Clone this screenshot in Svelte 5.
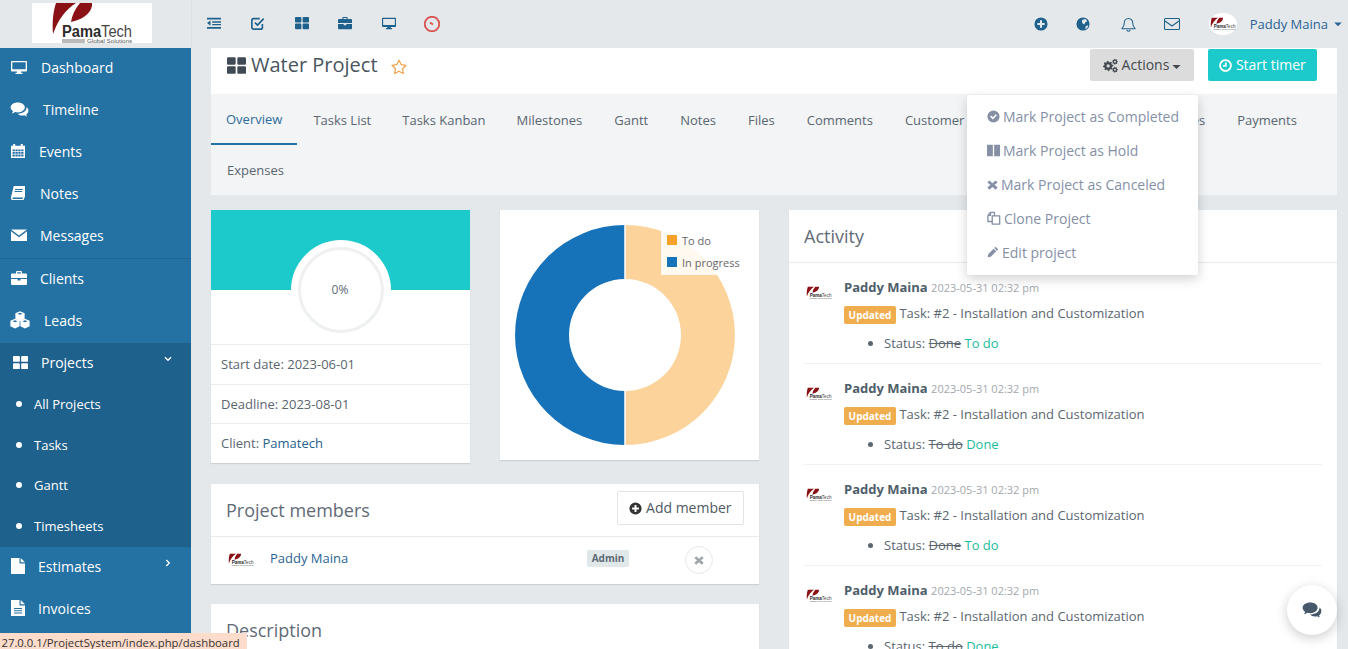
<script>
  const rr = (x, y, w, h, r) =>
    `M${x + r} ${y}h${w - 2 * r}a${r} ${r} 0 0 1 ${r} ${r}v${h - 2 * r}a${r} ${r} 0 0 1-${r} ${r}h-${w - 2 * r}a${r} ${r} 0 0 1-${r}-${r}v-${h - 2 * r}a${r} ${r} 0 0 1 ${r}-${r}z`;
  const disc = (cx, cy, r) => `M${cx - r} ${cy}a${r} ${r} 0 1 0 ${2 * r} 0a${r} ${r} 0 1 0-${2 * r} 0z`;
  const gear = (cx, cy, r, n) => {
    let p = '';
    for (let i = 0; i < n * 4; i++) {
      const a = (i / (n * 4)) * Math.PI * 2 - 0.2;
      const q = i % 4 < 2 ? r : r * 0.76;
      p += `${i ? 'L' : 'M'}${(cx + q * Math.cos(a)).toFixed(2)} ${(cy + q * Math.sin(a)).toFixed(2)}`;
    }
    return p + 'z' + disc(cx, cy, r * 0.32);
  };
  const calHoles = () => {
    let p = '';
    for (const y of [6.4, 9, 11.6]) for (const x of [2.5, 5.4, 8.3, 11.2]) p += `M${x} ${y}h2.300v1.800h-2.300z`;
    return p;
  };
  const hex = (x, y) =>
    `M${x} ${y - 4}l3.700 1.600v4.300L${x} ${y + 3.800}l-3.700-1.900v-4.300z M${x} ${y - 2.800}l-2 .8 2 .8 2-.8z`;

  const I = {
    desktop: { d: 'M1 2h14a1 1 0 0 1 1 1v8.500a1 1 0 0 1-1 1H10v1.300h1.500V15h-7v-1.200H6v-1.300H1a1 1 0 0 1-1-1V3a1 1 0 0 1 1-1z M1.300 3.300v6.900h13.400V3.300z' },
    comments: { d: 'M6.500 2C3 2 .5 3.900.5 6.200c0 1.300.8 2.500 2 3.300-.2.7-.6 1.300-1 1.800 1-.1 2-.5 2.800-1.100.7.2 1.400.3 2.200.3 3.500 0 6-1.900 6-4.300S10 2 6.500 2z M15.500 8.500c0-1-.6-1.900-1.500-2.600v.3c0 3-3 5.300-7 5.300h-.6c.9 1 2.400 1.600 4.100 1.600.6 0 1.200-.1 1.700-.2.7.5 1.400.8 2.300.9-.4-.4-.7-.9-.9-1.500 1.200-.8 1.900-2 1.900-3.800z' },
    calendar: { d: 'M1 2.800h2.200V1h2v1.800h5.600V1h2v1.800H15V15H1z' + calHoles() },
    book: { d: 'M4 1h11v10.500L13.500 15H2.500C1 15 .5 13.500 1 12L3.500 2C3.600 1.400 3.800 1 4 1z M5.200 4h7.500l-.2 1H5z M4.700 6h7.500l-.2 1H4.500z M3 12.500c-.4 0-.6.5-.5 1 .1.300.3.500.6.500h9.400l.7-1.500z' },
    envelope: { d: 'M0 2.500h16L8 8.500z M0 4.200l8 6 8-6V14H0z' },
    briefcase: { d: 'M5 3.500V2a1 1 0 0 1 1-1h4a1 1 0 0 1 1 1v1.500h4a1 1 0 0 1 1 1V8H0V4.500a1 1 0 0 1 1-1z M6.200 2.200v1.300h3.600V2.200z M0 9h6.500v1.500h3V9H16v5a1 1 0 0 1-1 1H1a1 1 0 0 1-1-1z' },
    cubes: { d: hex(8, 5) + hex(4, 11) + hex(12, 11) },
    th: { d: rr(0, 1, 7.3, 6.3, 1) + rr(8.700, 1, 7.3, 6.3, 1) + rr(0, 8.700, 7.3, 6.3, 1) + rr(8.700, 8.700, 7.3, 6.3, 1) },
    file: { d: 'M0 0h8.500v5.500H14V16H0z M9.700 0L14 4.300H9.700z' },
    filetext: { d: 'M0 0h8.500v5.500H14V16H0z M9.700 0L14 4.300H9.700z M3 8h8v1H3z M3 10.300h8v1H3z M3 12.600h8v1H3z' },
    down: { s: 'M4.500 6L8 9.500 11.500 6' },
    right: { s: 'M6 4.500L9.500 8 6 11.500' },
    outdent: { d: 'M0 2h16v2H0z M6 6h10v1.600H6z M6 9h10v1.600H6z M0 12.500h16v2H0z M4 5v6L0 8z' },
    check: { s: 'M13 9v4a2 2 0 0 1-2 2H3a2 2 0 0 1-2-2V5a2 2 0 0 1 2-2h7 M4.500 7.500L7.500 10.500 14.500 3' },
    clock: { s: 'M8 .8a7.200 7.200 0 1 0 .01 0z M6 6.500l3 2' },
    plus: { d: disc(8, 8, 7.5) + 'M6.800 3.800h2.400v3h3v2.400h-3v3H6.800v-3h-3V6.800h3z' },
    globe: { d: disc(8, 8, 7.5) + 'M7.500 3l3.500-.6 1.800 2.400-2.300 1.600-1 2.300-2.200-1.600-.6-2.400z M11 10.500l3-1.200-.7 2.800-2.600 2.200z' },
    bell: { s: 'M8 1.500c-3 0-4.500 2.500-4.500 5 0 3-1 4.500-2.500 6h14c-1.500-1.500-2.500-3-2.500-6 0-2.500-1.500-5-4.500-5z M6.300 13.500a1.700 1.700 0 0 0 3.400 0' },
    mail: { s: 'M1.500 2.500h13a1 1 0 0 1 1 1v9a1 1 0 0 1-1 1h-13a1 1 0 0 1-1-1v-9a1 1 0 0 1 1-1z M1 5l7 5 7-5' },
    star: { s: 'M8 1.200l2.100 4.400 4.900.7-3.500 3.400.8 4.800L8 12.200l-4.300 2.300.8-4.800L1 6.300l4.900-.7z' },
    cogs: { d: gear(5.5, 8.500, 5.5, 8) + gear(12.800, 4, 3.100, 7) + gear(12.800, 12.500, 3.100, 7) },
    timer: { s: 'M8 1.400a6.600 6.600 0 1 0 .01 0z M8.400 4.200v4.300H5' },
    okcircle: { d: disc(8, 8, 7.5) + 'M3.800 8.200l1.400-1.400 2 2 3.600-3.600 1.400 1.400-5 5z' },
    pause: { d: 'M0 1h7.200v14H0z M8.800 1H16v14H8.800z' },
    times: { d: 'M3.500 2L8 6l4.500-4 3 3L11 8.500l4.500 4-3 3L8 11.500l-4.500 4-3-3L5 8.500.5 5z' },
    clone: { s: 'M1 5l3-3.500h4.500V5 M1 5v7h4.500 M1 5h3V1.500 M6 5.500h8.500V15H6z' },
    pencil: { d: 'M11.500 1l3.500 3.500-1.800 1.800-3.500-3.500z M8.800 3.600l3.500 3.500-7.300 7.300L1 15l.6-4z' },
    caret: { d: 'M3 6h10l-5 5z' }
  };

  const nav = [
    { t: 'Dashboard', i: 'desktop', w: 30, s: 16, m: 0 },
    { t: 'Timeline', i: 'comments', w: 32, s: 19, m: -1 },
    { t: 'Events', i: 'calendar', w: 28, s: 16, m: -1 },
    { t: 'Notes', i: 'book', w: 29, s: 16, m: -1 },
    { t: 'Messages', i: 'envelope', w: 29, s: 16, m: 0 },
    { t: 'Clients', i: 'briefcase', w: 29, s: 16, m: 0, line: true },
    { t: 'Leads', i: 'cubes', w: 33, s: 20, m: -1 }
  ];
  const subs = ['All Projects', 'Tasks', 'Gantt', 'Timesheets'];
  const tabs = ['Overview', 'Tasks List', 'Tasks Kanban', 'Milestones', 'Gantt', 'Notes', 'Files', 'Comments', 'Customer feedback', 'Timesheets', 'Invoices', 'Payments', 'Expenses'];
  const menu = [
    ['okcircle', 'Mark Project as Completed', 13],
    ['pause', 'Mark Project as Hold', 13],
    ['times', 'Mark Project as Canceled', 11],
    ['clone', 'Clone Project', 14],
    ['pencil', 'Edit project', 12]
  ];
  const activity = [
    ['Done', 'To do'],
    ['To do', 'Done'],
    ['Done', 'To do'],
    ['To do', 'Done']
  ];
  const topLeft = ['outdent', 'check', 'th', 'briefcase', 'desktop', 'clock'];
  const topRight = ['plus', 'globe', 'bell', 'mail'];
</script>

{#snippet ic(n, cls = '')}
  <svg class="ic {cls}" viewBox="0 0 16 16" aria-hidden="true">
    {#if I[n].d}<path fill-rule="evenodd" d={I[n].d} />{/if}
    {#if I[n].s}<path class="st" d={I[n].s} />{/if}
  </svg>
{/snippet}

{#snippet logo(cls, vb)}
  <svg class={cls} viewBox={vb} aria-hidden="true">
    <path class="red" d="M24 0h20C34 6 26 17 21 31c-1-11 0-22 3-31z" />
    <path class="red" d="M48 0h12c1 7-6 16-21 19 1-7 4-13 9-19z" />
    <text class="lg" x="30" y="34" textLength="70" lengthAdjust="spacingAndGlyphs">Pama<tspan class="lg2">Tech</tspan></text>
    <path class="ln" d="M30 36.500h23v1H30z M30 38.500h23v1H30z" />
    <text class="lg3" x="55" y="40" textLength="45" lengthAdjust="spacingAndGlyphs">Global Solutions</text>
  </svg>
{/snippet}

<div class="app">
  <aside class="side">
    <div class="brand">{@render logo('biglogo', '0 0 120 40')}</div>
    <nav>
      {#each nav as n}
        <a class="item" class:line={n.line} href="#top">
          <span class="ibox" style="width:{n.w}px;--s:{n.s}px;--m:{n.m}px">{@render ic(n.i)}</span>{n.t}
        </a>
      {/each}
      <div class="group">
        <a class="item" href="#top">
          <span class="ibox" style="width:30px;--s:15px;--m:2px">{@render ic('th')}</span>Projects
          <span class="ang">{@render ic('down')}</span>
        </a>
        {#each subs as s}
          <a class="sub" href="#top"><i></i>{s}</a>
        {/each}
      </div>
      <a class="item" href="#top">
        <span class="ibox" style="width:27px;--s:16px;--m:0px">{@render ic('file')}</span>Estimates
        <span class="ang">{@render ic('right')}</span>
      </a>
      <a class="item" href="#top">
        <span class="ibox" style="width:27px;--s:16px;--m:0px">{@render ic('filetext')}</span>Invoices
      </a>
    </nav>
  </aside>

  <div class="main">
    <header class="top">
      <div class="tl">
        {#each topLeft as t}
          <span class="tbtn" class:red={t === 'clock'}>{@render ic(t)}</span>
        {/each}
      </div>
      <div class="tr">
        {#each topRight as t}
          <span class="tbtn2">{@render ic(t)}</span>
        {/each}
        <span class="user">
          <span class="avatar">{@render logo('mark', '15 -2 90 44')}</span>
          Paddy Maina {@render ic('caret', 'ucaret')}
        </span>
      </div>
    </header>

    <main class="page">
      <section class="head">
        <h1>{@render ic('th', 'hth')}Water Project <span class="star">{@render ic('star')}</span></h1>
        <div class="acts">
          <div class="actwrap">
            <button class="btn-act">{@render ic('cogs')} Actions {@render ic('caret', 'bcaret')}</button>
            <ul class="dd">
              {#each menu as m}
                <li style="--s:{m[2]}px">{@render ic(m[0])}<span>{m[1]}</span></li>
              {/each}
            </ul>
          </div>
          <button class="btn-timer">{@render ic('timer')} Start timer</button>
        </div>
      </section>

      <ul class="tabs">
        {#each tabs as t, i}
          <li class:on={i === 0}>{t}</li>
        {/each}
      </ul>

      <div class="cols">
        <div class="left">
          <div class="pair">
            <section class="card prog">
              <div class="band"></div>
              <div class="ring"><span>0%</span></div>
              <div class="spacer"></div>
              <div class="r">Start date: 2023-06-01</div>
              <div class="r">Deadline: 2023-08-01</div>
              <div class="r">Client: <a href="#top">Pamatech</a></div>
            </section>
            <section class="card chart">
              <svg viewBox="0 0 260 250" class="donut" aria-hidden="true">
                <path class="p1" d="M125 15a110 110 0 0 1 0 220v-54a56 56 0 0 0 0-112z" />
                <path class="p2" d="M125 15a110 110 0 0 0 0 220v-54a56 56 0 0 1 0-112z" />
                <path class="sep" d="M125 15v54M125 181v54" />
              </svg>
              <div class="legend">
                <div><i class="o"></i>To do</div>
                <div><i class="b"></i>In progress</div>
              </div>
            </section>
          </div>

          <section class="card members">
            <div class="chead">
              <h2>Project members</h2>
              <button class="btn-add">{@render ic('plus')} Add member</button>
            </div>
            <div class="mrow">
              {@render logo('mark', '15 -2 90 44')}
              <a href="#top">Paddy Maina</a>
              <span class="admin">Admin</span>
              <span class="xbtn">{@render ic('times')}</span>
            </div>
          </section>

          <section class="card desc"><h2>Description</h2></section>
        </div>

        <section class="card act">
          <h2 class="acth">Activity</h2>
          <div class="feed">
            {#each activity as a}
              <article>
                {@render logo('mark', '15 -2 90 44')}
                <div class="body">
                  <div class="who"><b>Paddy Maina</b> <small>2023-05-31 02:32 pm</small></div>
                  <div class="what"><span class="upd">Updated</span> Task: #2 - Installation and Customization</div>
                  <ul><li>Status: <s>{a[0]}</s> <em>{a[1]}</em></li></ul>
                </div>
              </article>
            {/each}
          </div>
        </section>
      </div>
    </main>
  </div>

  <button class="chat" aria-label="Chat">{@render ic('comments')}</button>
  <div class="status"><span>127.0.0.1/ProjectSystem/index.php/dashboard</span></div>
</div>

<style>
  :global(body) {
    margin: 0;
    background: #e4e8eb;
  }
  .app {
    position: relative;
    display: flex;
    width: 1348px;
    height: 649px;
    overflow: hidden;
    background: #e4e8eb;
    font-family: 'Open Sans', sans-serif;
    font-size: 13px;
    color: #4e5e6a;
  }
  a {
    text-decoration: none;
    color: inherit;
  }
  .ic {
    display: inline-block;
    width: 16px;
    height: 16px;
    fill: currentColor;
    flex: none;
    vertical-align: -3px;
  }
  .st {
    fill: none;
    stroke: currentColor;
    stroke-width: 1.5;
    stroke-linejoin: round;
  }

  /* sidebar */
  .side {
    width: 191px;
    flex: none;
    background: #2471a3;
  }
  .brand {
    height: 48px;
    box-sizing: border-box;
    background: #e4e8eb;
    padding: 3px 0 0 32px;
  }
  .biglogo {
    display: block;
    width: 120px;
    height: 40px;
    background: #fff;
  }
  .mark {
    display: block;
    width: 28px;
    height: 14px;
    flex: none;
  }
  .red {
    fill: #8a1216;
  }
  .lg {
    font: 700 16px 'Liberation Sans', sans-serif;
    fill: #2b2b2b;
  }
  .lg2 {
    font-weight: 400;
    fill: #444;
  }
  .ln {
    fill: #777;
  }
  .lg3 {
    font: 6px 'Liberation Sans', sans-serif;
    fill: #555;
  }
  .item {
    position: relative;
    display: flex;
    align-items: center;
    height: 42px;
    box-sizing: border-box;
    padding: 0 0 4px 11px;
    color: #fff;
    font-size: 14px;
  }
  .item.line {
    height: 43px;
    border-top: 1px solid #1f6591;
  }
  .ibox {
    display: flex;
    flex: none;
  }
  .ibox .ic {
    width: var(--s);
    height: var(--s);
    margin-left: var(--m);
  }
  .group {
    background: #1f618d;
  }
  .sub {
    display: flex;
    align-items: center;
    height: 40.500px;
    padding-bottom: 2px;
    box-sizing: border-box;
    color: #fff;
  }
  .sub i {
    width: 6px;
    height: 6px;
    border-radius: 50%;
    background: #fff;
    margin: 0 12px 0 16px;
  }
  .ang {
    position: absolute;
    left: 161px;
    top: 9px;
    display: flex;
  }
  .ang .ic {
    width: 14px;
    height: 14px;
  }

  /* top bar */
  .main {
    flex: 1;
    min-width: 0;
  }
  .top {
    height: 48px;
    box-sizing: border-box;
    border-left: 1px solid #dde1e4;
    display: flex;
    justify-content: space-between;
    align-items: center;
    color: #1f618d;
  }
  .tl {
    display: flex;
    padding-left: 15px;
    gap: 29.800px;
  }
  .tbtn {
    display: flex;
    width: 14px;
  }
  .tbtn .ic {
    width: 14px;
    height: 14px;
  }
  .tbtn .st {
    stroke-width: 1.9;
  }
  .tbtn.red {
    color: #d9534f;
  }
  .tbtn.red .ic {
    width: 16px;
    height: 16px;
    margin-left: -2px;
  }
  .tr {
    display: flex;
    align-items: center;
    padding-right: 4px;
    gap: 30px;
  }
  .tbtn2 {
    display: flex;
  }
  .tbtn2 .ic {
    width: 14px;
    height: 14px;
  }
  .tbtn2:nth-child(2) {
    margin-left: -2px;
  }
  .tbtn2:nth-child(3) {
    margin-left: 1px;
  }
  .tbtn2:nth-child(3) .ic {
    width: 15px;
    height: 15px;
  }
  .tbtn2:nth-child(4) {
    margin-left: -2px;
  }
  .tbtn2:nth-child(4) .ic {
    width: 16px;
    height: 16px;
  }
  .tbtn2 .st {
    stroke-width: 1.1;
  }
  .user {
    display: flex;
    align-items: center;
    margin-left: -1px;
    color: #2a6496;
    font-size: 13px;
    gap: 4px;
  }
  .avatar {
    width: 28px;
    height: 22px;
    border-radius: 50%;
    background: #fff;
    display: flex;
    align-items: center;
    margin-right: 9px;
  }
  .ucaret {
    width: 12px;
    height: 12px;
    vertical-align: 0;
  }

  /* page */
  .page {
    padding: 0 11px 0 20px;
  }
  .head {
    height: 46px;
    background: #fff;
    display: flex;
    justify-content: space-between;
    padding: 0 20px 0 16px;
  }
  h1 {
    margin: 0;
    font-size: 20px;
    font-weight: 400;
    color: #4a5560;
    line-height: 34px;
    white-space: nowrap;
  }
  .hth {
    width: 19px;
    height: 19px;
    color: #3f4a54;
    margin-right: 5px;
  }
  .star {
    color: #f0a24b;
    margin-left: 8px;
  }
  .star .ic {
    width: 16px;
    height: 16px;
  }
  .star .st {
    stroke-width: 1.2;
  }
  .acts {
    display: flex;
    gap: 14px;
    align-items: flex-start;
    padding-top: 1px;
  }
  .actwrap {
    position: relative;
  }
  button {
    font-family: inherit;
    border: 0;
    cursor: pointer;
  }
  .btn-act {
    height: 32px;
    width: 104px;
    background: #dcdcdc;
    color: #44494f;
    font-size: 14px;
    border-radius: 2px;
    padding: 0 0 2px 2px;
    white-space: nowrap;
  }
  .btn-act .ic {
    width: 15px;
    height: 15px;
  }
  .btn-act .bcaret {
    width: 13px;
    height: 13px;
    vertical-align: -3px;
    margin-left: -3px;
  }
  .btn-timer {
    height: 32px;
    width: 109px;
    background: #1ccacc;
    color: #fff;
    font-size: 14px;
    border-radius: 2px;
    padding: 0 0 2px 0;
    white-space: nowrap;
  }
  .btn-timer .ic {
    width: 13px;
    height: 13px;
    vertical-align: -2px;
  }
  .btn-timer .st {
    stroke-width: 2.200;
  }
  .dd {
    position: absolute;
    top: 46px;
    right: -4px;
    width: 231px;
    height: 180px;
    box-sizing: border-box;
    margin: 0;
    padding: 4px 0 0;
    list-style: none;
    background: #fff;
    border-radius: 2px;
    box-shadow: 0 4px 12px rgba(0, 0, 0, 0.18);
    z-index: 5;
    color: #8590a6;
    font-size: 14px;
  }
  .dd li {
    height: 34px;
    display: flex;
    align-items: center;
    padding-left: 20px;
    white-space: nowrap;
    gap: 3px;
  }
  .dd .ic {
    width: var(--s);
    height: var(--s);
  }

  .tabs {
    margin: 0;
    padding: 0;
    list-style: none;
    display: flex;
    flex-wrap: wrap;
    background: #f2f4f6;
    height: 101px;
    align-content: flex-start;
  }
  .tabs li {
    height: 51px;
    box-sizing: border-box;
    padding: 16px 15px 0;
    margin-right: 1px;
    line-height: 20px;
    color: #5a6670;
    white-space: nowrap;
  }
  .tabs li:nth-child(n + 4) {
    margin-right: 2px;
  }
  .tabs li:last-child {
    height: 50px;
    padding: 15px 16px 0;
  }
  .tabs li.on {
    color: #2f6d9b;
    border-bottom: 2px solid #2471a3;
    padding-top: 15px;
  }

  .cols {
    display: flex;
    gap: 30px;
    margin-top: 15px;
    align-items: flex-start;
  }
  .left {
    width: 548px;
    flex: none;
  }
  .pair {
    display: flex;
    gap: 30px;
    align-items: flex-start;
    margin-bottom: 21px;
  }
  .card {
    background: #fff;
    box-shadow: 0 1px 1px rgba(0, 0, 0, 0.1);
  }
  .prog {
    position: relative;
    width: 259px;
  }
  .band {
    height: 80px;
    background: #1ccacc;
  }
  .ring {
    position: absolute;
    left: 80px;
    top: 30px;
    width: 100px;
    height: 100px;
    border-radius: 50%;
    background: #fff;
    display: flex;
    align-items: center;
    justify-content: center;
  }
  .ring span {
    width: 80px;
    height: 78px;
    border: 3px solid #eef0f1;
    border-radius: 50%;
    display: flex;
    align-items: center;
    justify-content: center;
    font-size: 12px;
    color: #5f6a75;
    padding: 0 2px 2px 0;
    width: 78px;
  }
  .spacer {
    height: 54px;
  }
  .r {
    border-top: 1px solid #ececec;
    height: 39.600px;
    box-sizing: border-box;
    padding: 9px 10px 0;
    line-height: 20px;
    color: #5a6670;
  }
  .r a {
    color: #1f618d;
  }
  .chart {
    position: relative;
    width: 259px;
    height: 250px;
  }
  .donut {
    display: block;
    width: 260px;
    height: 250px;
  }
  .p1 {
    fill: #fcd49b;
  }
  .p2 {
    fill: #1672b9;
  }
  .sep {
    stroke: #fff;
    stroke-width: 1.500;
    fill: none;
  }
  .legend {
    position: absolute;
    left: 161px;
    top: 19px;
    width: 84px;
    height: 46px;
    background: rgba(255, 255, 255, 0.85);
    font-size: 11px;
    color: #666;
    box-sizing: border-box;
  }
  .legend div {
    display: flex;
    align-items: center;
    height: 22px;
    white-space: nowrap;
  }
  .legend i {
    width: 10px;
    height: 10px;
    margin: 0 5px 0 6px;
  }
  .legend .o {
    background: #f7a12c;
  }
  .legend .b {
    background: #1672b9;
  }

  h2 {
    margin: 0;
    font-size: 18px;
    font-weight: 400;
    color: #5f6b76;
  }
  .members {
    margin-bottom: 20px;
  }
  .chead {
    height: 52px;
    border-bottom: 1px solid #e8eaec;
    display: flex;
    justify-content: space-between;
    align-items: center;
    padding: 0 15px;
  }
  .btn-add {
    width: 127px;
    height: 34px;
    background: #fff;
    border: 1px solid #e2e4e6;
    border-radius: 2px;
    color: #4e5a64;
    font-size: 14px;
    padding: 0;
    white-space: nowrap;
    margin-bottom: 4px;
  }
  .btn-add .ic {
    width: 13px;
    height: 13px;
    color: #333;
    vertical-align: -2px;
  }
  .mrow {
    height: 47px;
    display: flex;
    align-items: center;
    padding-left: 16px;
  }
  .mrow a {
    margin-left: 15px;
    color: #2a6496;
    width: 317px;
    padding-bottom: 4px;
  }
  .admin {
    width: 42px;
    height: 17px;
    background: #e0e8ea;
    border-radius: 2px;
    font-size: 10px;
    font-weight: 700;
    line-height: 17px;
    text-align: center;
    color: #5f6b76;
    margin-bottom: 3px;
  }
  .xbtn {
    width: 28px;
    height: 28px;
    margin: 0 0 1px 56px;
    box-sizing: border-box;
    border: 1px solid #e6e8ea;
    border-radius: 50%;
    display: flex;
    align-items: center;
    justify-content: center;
    color: #a0a5aa;
  }
  .xbtn .ic {
    width: 10px;
    height: 10px;
  }
  .desc {
    height: 60px;
    padding: 15px;
    box-sizing: border-box;
    line-height: 22px;
  }

  .act {
    width: 548px;
    flex: none;
    height: 460px;
  }
  .acth {
    height: 53px;
    box-sizing: border-box;
    line-height: 52px;
    padding-left: 15px;
    border-bottom: 1px solid #e8eaec;
  }
  .feed {
    padding: 14px 15px 0;
  }
  article {
    display: flex;
    height: 87px;
    box-sizing: border-box;
    border-bottom: 1px solid #f0f1f2;
    margin-bottom: 14px;
  }
  article .mark {
    margin: 9px 11px 0 1px;
  }
  .body {
    flex: 1;
  }
  .who {
    line-height: 20px;
    color: #4e5e6a;
  }
  .who b {
    font-weight: 700;
  }
  .who small {
    font-size: 11px;
    color: #a3a8ad;
  }
  .what {
    margin-top: 6px;
    line-height: 19px;
    color: #5a6670;
  }
  .upd {
    display: inline-block;
    width: 52px;
    height: 18px;
    background: #efad4d;
    border-radius: 2px;
    color: #fff;
    font-size: 10px;
    font-weight: 700;
    line-height: 18px;
    text-align: center;
    vertical-align: -1px;
  }
  article ul {
    margin: 9px 0 0;
    padding-left: 40px;
    line-height: 20px;
    color: #5a6670;
  }
  em {
    font-style: normal;
    color: #1abc9c;
  }

  .chat {
    position: absolute;
    left: 1287px;
    top: 585px;
    width: 50px;
    height: 50px;
    border-radius: 50%;
    background: #fff;
    box-shadow: 0 3px 12px rgba(0, 0, 0, 0.2);
    color: #46586a;
    display: flex;
    align-items: center;
    justify-content: center;
    padding: 0;
  }
  .chat .ic {
    width: 20px;
    height: 20px;
    vertical-align: 0;
  }
  .status {
    position: absolute;
    left: 0;
    bottom: 0;
    width: 247px;
    height: 16px;
    background: #fddccb;
    overflow: hidden;
    z-index: 6;
    font-size: 11.300px;
    line-height: 19px;
    color: #333;
    white-space: nowrap;
  }
  .status span {
    margin-left: -5px;
  }
</style>
